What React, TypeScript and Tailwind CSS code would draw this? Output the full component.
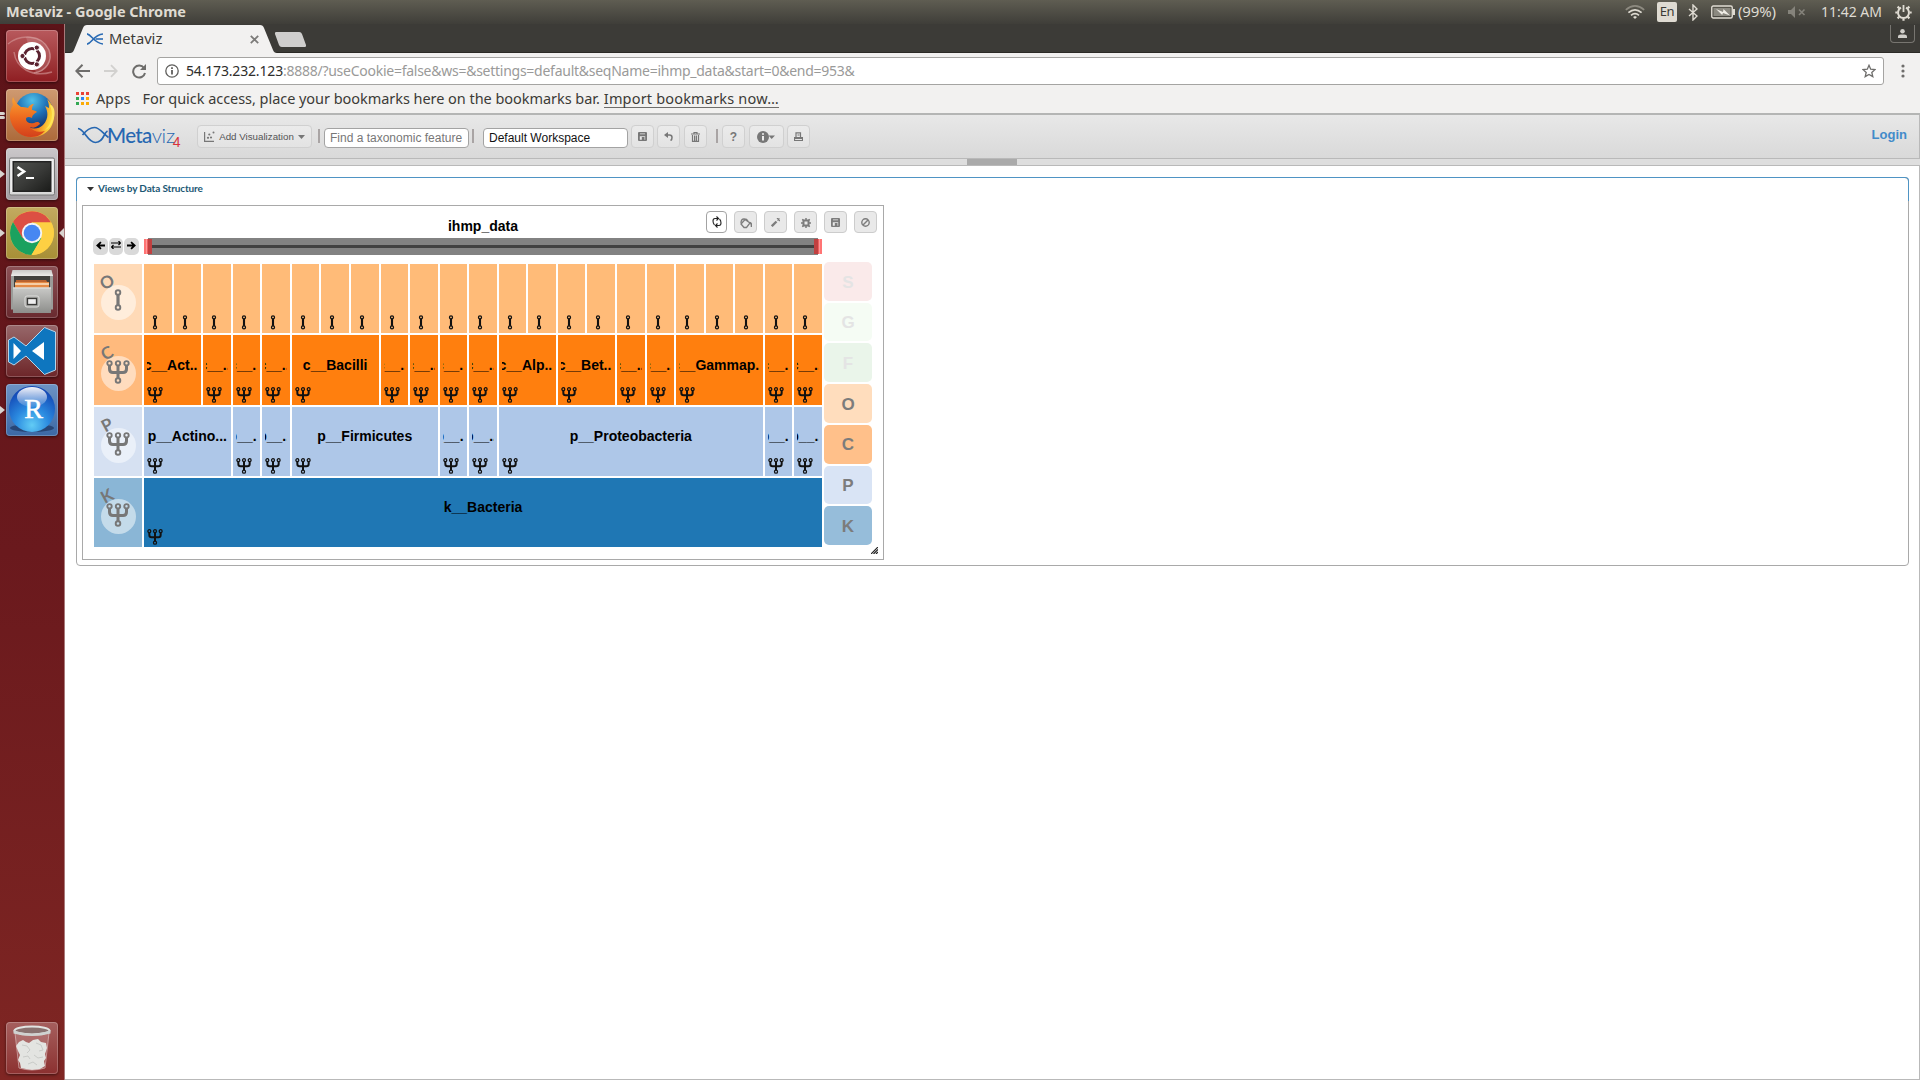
import React from "react";

type P = { children?: React.ReactNode; className?: string };

const NOTO = "font-['Noto_Sans',sans-serif]";
const ARIAL = "font-['Liberation_Sans',sans-serif]";

/* ---------- desktop panel ---------- */

function TopPanel() {
  return (
    <div className={`flex h-6 shrink-0 items-center bg-gradient-to-b from-[#5f5d52] to-[#3f3e39] text-[#dfdbd2] ${NOTO}`}>
      <span className="-mt-[2px] ml-[6px] text-[14.5px] leading-6 font-bold tracking-[-0.03px]">Metaviz - Google Chrome</span>
      <svg className="ml-auto h-[14px] w-5" viewBox="0 0 20 14" fill="none" stroke="#dfdbd2" strokeWidth="1.7">
        <path d="M.8 4.8Q10-3 19.2 4.8" stroke="#8d8a80" />
        <path d="M3.4 7.6Q10 2 16.6 7.6" />
        <path d="M6 10.3Q10 7 14 10.3" />
        <path d="M8 12l2 2 2-2-2-1z" fill="#dfdbd2" stroke="none" />
      </svg>
      <span className="ml-3 flex h-5 w-5 items-center justify-center rounded-[2px] bg-[#dfdbd2] text-[13px] tracking-[-0.5px] text-[#3c3b37]">En</span>
      <svg className="ml-[11px] h-[17px] w-[10px]" viewBox="0 0 10 17" fill="none" stroke="#dfdbd2" strokeWidth="1.4">
        <path d="M1 5l8 7-4 4V1l4 4-8 7" />
      </svg>
      <svg className="ml-[13px] h-[14px] w-6" viewBox="0 0 24 14">
        <rect x=".75" y="1" width="20.5" height="12" rx="1.5" fill="none" stroke="#dfdbd2" strokeWidth="1.4" />
        <rect x="2.5" y="3" width="17" height="8" fill="#8b8980" />
        <path d="M22 4h2v6h-2z" fill="#dfdbd2" />
        <path d="M5 4l7 3 .5-3L19 10.5l-7-2.5-.8 2z" fill="#f0ede6" />
      </svg>
      <span className="-mt-[2px] ml-[3px] text-[15px] leading-6 tracking-[-0.13px]">(99%)</span>
      <svg className="ml-3 h-3 w-[18px]" viewBox="0 0 18 12" fill="#85837b">
        <path d="M0 4h3l4-4v12L3 8H0z" />
        <path d="M11 3.5l5.5 5.5M16.500 3.5L11 9" stroke="#85837b" strokeWidth="1.6" />
      </svg>
      <span className="-mt-px ml-[15px] text-[14px] leading-6">11:42 AM</span>
      <svg className="mr-2 ml-[13px] h-[17px] w-[17px]" viewBox="0 0 17 17" fill="none" stroke="#dfdbd2">
        <path d="M6 3.700A5.500 5.500 0 1 0 11 3.700" strokeWidth="2" />
        <path d="M8.500 1v7" strokeWidth="1.800" />
        <path d="M.3 8.500h2M14.700 8.500h2M2.600 2.600l1.700 1.700M14.400 2.600l-1.700 1.700M2.600 14.400l1.600-1.600M14.400 14.400l-1.600-1.600M8.500 14.700v2" strokeWidth="2.200" />
      </svg>
    </div>
  );
}

/* ---------- launcher ---------- */

function Tile({ children, className = "", left = 0, right = false }: P & { left?: number; right?: boolean }) {
  return (
    <div className="flex h-[52px] items-center">
      <div className="flex w-[6px] flex-col gap-[1px]">
        {left === 1 && <span className="h-0 w-0 border-y-[4px] border-l-[5px] border-y-transparent border-l-[#d9d4d0]" />}
        {left === 2 && (
          <>
            <span className="h-[3px] w-[5px] rounded-r-full bg-[#d9d4d0]" />
            <span className="h-[3px] w-[5px] rounded-r-full bg-[#d9d4d0]" />
          </>
        )}
      </div>
      <div className={`flex h-[52px] w-[52px] items-center justify-center overflow-hidden rounded-[4px] shadow-[inset_0_0_0_1px_rgba(255,255,255,0.22),0_1px_3px_rgba(0,0,0,0.5)] ${className}`}>{children}</div>
      <div className="flex w-[6px] justify-end">
        {right && <span className="h-0 w-0 border-y-[5px] border-r-[5px] border-y-transparent border-r-[#d9d4d0]" />}
      </div>
    </div>
  );
}

function UbuntuIcon() {
  return (
    <svg className="h-[52px] w-[52px]" viewBox="0 0 52 52" fill="none">
      <path d="M2 14C14 4 36 4 43 20c4 11-3 21-15 23" stroke="#d69b9b" strokeOpacity=".6" strokeWidth="1.500" />
      <path d="M8 22c2 16 18 26 38 20" stroke="#d69b9b" strokeOpacity=".6" strokeWidth="1.500" />
      <path d="M20 7c16-2 27 12 24 24-2 7-7 11-14 12z" fill="#fff" fillOpacity=".14" />
      <circle cx="26" cy="26" r="14" fill="#fff" />
      <circle cx="26" cy="26" r="7.500" stroke="#5a2230" strokeWidth="3" />
      <path d="M26 26H15M26 26l5.500-9.500M26 26l5.500 9.500" stroke="#fff" strokeWidth="1.800" />
      <circle cx="26" cy="26" r="5.500" fill="#fff" />
      <g fill="#5a2230" stroke="#fff" strokeWidth="1">
        <circle cx="16.500" cy="26" r="2.600" />
        <circle cx="30.800" cy="17.600" r="2.600" />
        <circle cx="30.800" cy="34.400" r="2.600" />
      </g>
    </svg>
  );
}

function FirefoxIcon() {
  return (
    <svg className="h-[46px] w-[46px]" viewBox="0 0 46 46">
      <defs>
        <radialGradient id="ffg" cx=".45" cy=".2" r=".8">
          <stop offset="0" stopColor="#4fc0e8" />
          <stop offset=".5" stopColor="#1e6fb5" />
          <stop offset="1" stopColor="#12275f" />
        </radialGradient>
        <linearGradient id="fff" x1="0" y1="0" x2="1" y2=".2">
          <stop offset="0" stopColor="#e8641c" />
          <stop offset=".7" stopColor="#ee7a1d" />
          <stop offset="1" stopColor="#fddc3c" />
        </linearGradient>
        <linearGradient id="ffb" x1="0" y1="0" x2="0" y2="1">
          <stop offset="0" stopColor="#f9a535" />
          <stop offset=".5" stopColor="#ee6b1f" />
          <stop offset="1" stopColor="#d3401b" />
        </linearGradient>
      </defs>
      <circle cx="25" cy="20" r="19" fill="url(#ffg)" />
      <path d="M38 7c8 7 9 20 4 28-5 8-14 11-21 10-9-1-16-7-18-14l7-6c4 11 17 15 24 8 6-6 5-14 2-19l4 2c0-4-1-7-2-9z" fill="url(#fff)" />
      <path d="M4 5c-1 3-1 5 0 8-3 4-4 11-2 17 3 9 11 15 20 15 7 0 11-3 14-6-7 2-12 0-15-4 5 2 7-1 10-3-1-3-4-2-6-1-5 1-8-1-8-4 0-2 3-3 6-1 0-3 2-4 5-6-1-1-3-2-5-2 0-2 0-4 2-6-3 0-5 2-6 4-2-1-5-1-7-1-3-2-6-5-8-10z" fill="url(#ffb)" />
      <path d="M41 14c4 8 2 18-5 24 8-3 12-17 8-23-1-2-3-3-3-1z" fill="#ffe45c" />
    </svg>
  );
}

function TerminalIcon() {
  return (
    <svg className="h-[52px] w-[52px]" viewBox="0 0 52 52">
      <defs>
        <linearGradient id="tms" x1="0" y1="0" x2="1" y2="1">
          <stop offset="0" stopColor="#4e504d" />
          <stop offset=".5" stopColor="#3a3b39" />
          <stop offset="1" stopColor="#1c1d1b" />
        </linearGradient>
      </defs>
      <rect x="3.500" y="10" width="45" height="37" rx="1.500" fill="#d9d9d9" stroke="#777" />
      <rect x="4.500" y="11" width="43" height="33" fill="#efefef" />
      <rect x="6.500" y="13" width="39" height="31" fill="#222" />
      <rect x="8" y="14.500" width="36" height="28" fill="url(#tms)" />
      <path d="M11.500 19l6.500 4.500-6.500 4.500" fill="none" stroke="#fff" strokeWidth="2.600" />
      <path d="M20 30h8" stroke="#fff" strokeWidth="2.200" />
    </svg>
  );
}

function ChromeIcon() {
  return (
    <svg className="h-[44px] w-[44px]" viewBox="0 0 44 44">
      <circle cx="22" cy="22" r="22" fill="#fdd043" />
      <path d="M3 11A22 22 0 0 1 41.050 11.500H22L12.500 27.500z" fill="#dc4f43" />
      <path d="M3 11A22 22 0 0 0 21.500 44l10-17-19 0z" fill="#1aa15f" />
      <path d="M41.050 11.500A22 22 0 0 1 21.500 44L31.500 27 22 11.500z" fill="#fdd043" />
      <circle cx="22" cy="22" r="10.200" fill="#f4f4f4" />
      <circle cx="22" cy="22" r="8.300" fill="#4787f2" />
    </svg>
  );
}

function FilesIcon() {
  return (
    <svg className="h-[52px] w-[52px]" viewBox="0 0 52 52">
      <defs>
        <linearGradient id="fls" x1="0" y1="0" x2="0" y2="1">
          <stop offset="0" stopColor="#c9c9c7" />
          <stop offset="1" stopColor="#8d8e8b" />
        </linearGradient>
        <linearGradient id="flt" x1="0" y1="0" x2="0" y2="1">
          <stop offset="0" stopColor="#c8c8c6" />
          <stop offset="1" stopColor="#ececea" />
        </linearGradient>
      </defs>
      <rect x="5" y="8.500" width="42" height="35" fill="#9b9c99" />
      <path d="M6.500 4h39L47 10H5z" fill="url(#flt)" />
      <rect x="8" y="10" width="36" height="12" fill="#40403d" />
      <path d="M10 14h30l2 3H10z" fill="#b9622f" />
      <path d="M9 16h34v6H9z" fill="#e58a45" />
      <path d="M9 18h34" stroke="#fbe3c7" strokeWidth="1.300" />
      <path d="M7 21.500h38V47H7z" fill="url(#fls)" />
      <path d="M7 22h38" stroke="#e4e4e2" strokeWidth="1" />
      <rect x="19" y="30" width="14" height="11" rx="2" fill="#a4a5a2" stroke="#dededc" />
      <rect x="21.500" y="32.500" width="9" height="6" fill="#eee" stroke="#3b3b39" strokeWidth="1.300" />
    </svg>
  );
}

function CodeIcon() {
  return (
    <svg className="h-[52px] w-[52px]" viewBox="0 0 52 52">
      <path d="M38.500 2.500L49.500 7v38l-11 4.500L20 31 8 40l-5.500-3V15L8 12l12 9z" fill="#0e76bf" stroke="#b7d5ea" strokeWidth="1" />
      <path d="M38 17v18L26 26z" fill="#fff" />
      <path d="M7.500 18v16l7.500-8z" fill="#fff" />
    </svg>
  );
}

function RIcon() {
  return (
    <svg className="h-[52px] w-[52px]" viewBox="0 0 52 52">
      <defs>
        <radialGradient id="rst" cx=".5" cy=".85" r=".8">
          <stop offset="0" stopColor="#62ccf5" />
          <stop offset=".45" stopColor="#2b8be0" />
          <stop offset="1" stopColor="#1246b4" />
        </radialGradient>
        <linearGradient id="rsh" x1="0" y1="0" x2="0" y2="1">
          <stop offset="0" stopColor="#fff" stopOpacity=".95" />
          <stop offset="1" stopColor="#fff" stopOpacity=".1" />
        </linearGradient>
      </defs>
      <ellipse cx="26" cy="44" rx="22" ry="4" fill="#1c3560" fillOpacity=".7" />
      <circle cx="26" cy="25" r="23" fill="url(#rst)" />
      <ellipse cx="26" cy="13" rx="15" ry="10" fill="url(#rsh)" />
      <text x="27.500" y="34" textAnchor="middle" className="font-['Liberation_Serif',serif] text-[28px]" fill="#fff" stroke="#fff" strokeWidth=".5">R</text>
    </svg>
  );
}

function TrashTile() {
  return (
    <svg className="h-[52px] w-[52px]" viewBox="0 0 52 52">
      <path d="M9 11h34l-5 35q-12 4-24 0z" fill="#f0dede" fillOpacity=".2" />
      <path d="M13 20l4-2 3 2 3 1 4-3 5-1 3 3 5 1 1 5-2 6 1 4-2 3 1 5-5 3-8 1-6-1-5-1-1-5-2-3 2-5-2-4-2-5z" fill="#e3e4e1" />
      <path d="M16 23l5 1 3 4-3 3M30 21l5 2 2 5-4 1M17 35l5-1 2 3M28 33l4 3 5-1M22 42l5-2 4 3" fill="none" stroke="#c9cbc8" strokeWidth="1" />
      <path d="M9 11l4 35q13 4 26 0l4-35" fill="none" stroke="#e6cfcf" strokeOpacity=".6" />
      <ellipse cx="26" cy="8.500" rx="17.500" ry="4" fill="#8a7270" stroke="#e2e4e2" strokeWidth="2" />
      <path d="M7.500 8v3.500q18.500 5 37 0V8q-18.500 7.500-37 0z" fill="#cfd2d0" />
    </svg>
  );
}

function Launcher() {
  return (
    <div className="flex w-16 shrink-0 flex-col gap-[7px] bg-gradient-to-b from-[#5c1318] via-[#6a191d] to-[#7f2623] pt-[6px] pb-[6px]">
      <Tile className="bg-gradient-to-b from-[#b8595d] to-[#8f1d22]"><UbuntuIcon /></Tile>
      <Tile left={2} className="bg-gradient-to-b from-[#cf9a71] to-[#ac6a3a]"><FirefoxIcon /></Tile>
      <Tile left={1} className="bg-gradient-to-b from-[#cbc8ca] to-[#a39fa3]"><TerminalIcon /></Tile>
      <Tile left={1} right className="bg-gradient-to-b from-[#c3aa60] to-[#a78f36]"><ChromeIcon /></Tile>
      <Tile className="bg-gradient-to-b from-[#8c5257] to-[#692a2f]"><FilesIcon /></Tile>
      <Tile className="bg-gradient-to-b from-[#97686b] to-[#6d2529]"><CodeIcon /></Tile>
      <Tile left={1} className="bg-gradient-to-b from-[#6d93c4] to-[#3c69a6]"><RIcon /></Tile>
      <div className="mt-auto"><Tile className="bg-gradient-to-b from-[#a55f5e] to-[#8c3030]"><TrashTile /></Tile></div>
    </div>
  );
}

/* ---------- browser chrome ---------- */

function TabStrip() {
  return (
    <div className="flex h-[29px] shrink-0 items-start border-b border-[#2b2a26] bg-[#3c3b37]">
      <div className="relative mt-[1px] -mb-[1px] ml-[5px] flex h-[28px] w-[207px] items-center">
        <svg className="absolute inset-0 h-[28px] w-[207px]" viewBox="0 0 207 28">
          <path d="M0 28q3 0 4-3L13 3q1-3 4-3h173q3 0 4 3l9 22q1 3 4 3z" fill="#f2f1f0" />
        </svg>
        <svg className="relative ml-[17px] h-3 w-4" viewBox="0 0 16 12" fill="none" stroke="#2a6bb4" strokeWidth="1.600">
          <path d="M0 .8C5 2 7 10 16 11" />
          <path d="M0 11.200C5 10 7 1.500 16 1" />
          <path d="M8.500 6H16" />
        </svg>
        <span className={`relative -mt-[2px] ml-[6px] text-[14.7px] leading-7 text-[#3c3b37] ${NOTO}`}>Metaviz</span>
        <svg className="relative mr-[18px] ml-auto h-[9px] w-[9px]" viewBox="0 0 9 9" stroke="#7c7b79" strokeWidth="1.800">
          <path d="M.8.8l7.400 7.400M8.200.8L.8 8.200" />
        </svg>
      </div>
      <div className="mt-2 ml-0 h-[15px] w-[27px] skew-x-[20deg] rounded-[2px] bg-[#cfcecd]" />
      <div className="mt-[1px] mr-[5px] ml-auto flex h-[18px] w-[25px] items-center justify-center rounded-b-[4px] border border-t-0 border-[#777570]">
        <svg className="h-[9px] w-[9px]" viewBox="0 0 10 10" fill="#d0cec9">
          <circle cx="5" cy="2.500" r="2.500" />
          <path d="M0 10V8q0-2 3-2h4q3 0 3 2v2z" />
        </svg>
      </div>
    </div>
  );
}

function AddressBar() {
  return (
    <div className="flex h-[36px] shrink-0 items-center bg-[#f2f1f0]">
      <svg className="ml-[10px] h-[14px] w-[15px]" viewBox="0 0 15 14" fill="none" stroke="#6e6d6b" strokeWidth="2"><path d="M15 7H1.500M7.500.8L1.300 7l6.200 6.200" /></svg>
      <svg className="ml-[14px] h-[14px] w-[14px]" viewBox="0 0 15 14" fill="none" stroke="#d2d1cf" strokeWidth="2"><path d="M0 7h13.500M7.500.8L13.700 7l-6.200 6.200" /></svg>
      <svg className="ml-[14px] h-[15px] w-[14px]" viewBox="0 0 14 15" fill="none" stroke="#6e6d6b" strokeWidth="2"><path d="M12 4A6 6 0 1 0 13 9" /><path d="M14 0v6H8z" fill="#6e6d6b" stroke="none" /></svg>
      <div className={`ml-[11px] flex h-7 w-[1727px] items-center rounded-[3px] border border-[#a5a4a2] bg-white text-[14px] ${NOTO}`}>
        <svg className="ml-[7px] h-[14px] w-[14px]" viewBox="0 0 14 14" fill="none" stroke="#5f5e5c"><circle cx="7" cy="7" r="6.200" strokeWidth="1.300" /><path d="M7 6v4.500M7 3.300V5" strokeWidth="1.800" /></svg>
        <span className="-mt-[2px] ml-[7px] tracking-[-0.17px] text-[#2e2e2c]">54.173.232.123</span>
        <span className="-mt-[2px] tracking-[-0.26px] text-[#9a9a99]">:8888/?useCookie=false&amp;ws=&amp;settings=default&amp;seqName=ihmp_data&amp;start=0&amp;end=953&amp;</span>
        <svg className="mr-[7px] ml-auto h-[14px] w-[14px]" viewBox="0 0 14 14" fill="none" stroke="#6e6d6b" strokeWidth="1.300"><path d="M7 1.300l1.700 3.900 4.300.4-3.200 2.800 1 4.200L7 10.400l-3.800 2.200 1-4.200L1 5.600l4.300-.4z" /></svg>
      </div>
      <svg className="ml-[16.500px] h-[14px] w-1" viewBox="0 0 4 14" fill="#6e6d6b"><circle cx="2" cy="2" r="1.600" /><circle cx="2" cy="7" r="1.600" /><circle cx="2" cy="12" r="1.600" /></svg>
    </div>
  );
}

const APP_COLORS = ["bg-[#ea4335]", "bg-[#ea4335]", "bg-[#ea4335]", "bg-[#34a853]", "bg-[#2f84f5]", "bg-[#fbab05]", "bg-[#34a853]", "bg-[#fbab05]", "bg-[#fbab05]"];

function BookmarksBar() {
  return (
    <div className={`flex h-[26px] shrink-0 items-center border-b-2 border-[#b4b5b4] bg-[#f2f1f0] text-[14.5px] text-[#3c3b37] ${NOTO}`}>
      <div className="mt-[-5px] ml-[11px] grid grid-cols-3 gap-[2px]">
        {APP_COLORS.map((c, i) => <i key={i} className={`h-[3px] w-[3px] ${c}`} />)}
      </div>
      <span className="mt-[-5px] ml-[7px] tracking-[0.1px]">Apps</span>
      <span className="mt-[-5px] ml-[12px] tracking-[-0.045px]">For quick access, place your bookmarks here on the bookmarks bar.</span>
      <span className="mt-[-5px] ml-1 border-b border-[#6e6d6b] leading-[18px] tracking-[0.18px]">Import bookmarks now…</span>
    </div>
  );
}

/* ---------- Metaviz page ---------- */

function NavButton({ children, className = "w-[23px]" }: P) {
  return <div className={`flex h-[23px] shrink-0 items-center justify-center rounded-[4px] border border-[#d0d0d0] bg-gradient-to-b from-[#ebebeb] to-[#e3e3e3] text-[#777] ${className}`}>{children}</div>;
}

function SaveIcon() {
  return (
    <svg className="h-[9px] w-[9px]" viewBox="0 0 9 9" fill="currentColor">
      <path fillRule="evenodd" d="M1 0h7q1 0 1 1v7q0 1-1 1H1Q0 9 0 8V1q0-1 1-1zM2 1.500v.7h5v-.7zM1.800 4.300v3.500h5.400V4.300z" />
      <path d="M3.800 5h2.700v3H3.800z" />
    </svg>
  );
}

function Sep({ className = "" }: P) {
  return <span className={`mt-[-1px] h-[14px] w-[2px] bg-[#a9a4a4] ${className}`} />;
}

function PageHeader() {
  return (
    <>
      <div className={`flex h-[44px] shrink-0 items-center border-r border-b border-[#b9b9b9] bg-gradient-to-b from-[#e8e8e8] to-[#d9d9d9] ${ARIAL}`}>
        <div className="mt-[-3px] ml-[12px] flex w-[120px] items-center">
          <svg className="h-[18px] w-[32px] shrink-0" viewBox="0 0 31 18" fill="none" stroke="#2767b1" strokeWidth="1.700">
            <path d="M.5 2.500C7 3 10 16.500 18 16.500S26 7 30 5" />
            <path d="M5 9C9 4 12 1.500 17 1.500S26 8 31 11.500" />
          </svg>
          <span className="-ml-[2px] font-['Lato',sans-serif] text-[20.500px] leading-[20px] font-medium tracking-[-0.65px] text-[#2767b1]">Meta<span className="font-light tracking-[-0.3px]">viz</span></span>
          <span className="mt-[14px] -ml-[2px] text-[14px] leading-3 text-[#d8333b]">4</span>
        </div>
        <NavButton className="w-[115px] text-[9.75px]">
          <svg className="mr-[4px] ml-[2px] h-[11px] w-[11px]" viewBox="0 0 11 11" fill="#777"><path d="M0 1h1.200v8.800H10V11H0z" /><circle cx="4" cy="6.800" r="1.100" /><circle cx="7" cy="6.500" r="1.100" /><circle cx="5.300" cy="3.500" r="1.100" /><circle cx="9.500" cy="1.500" r="1" /></svg>
          <span className="mt-px text-[#555]">Add Visualization</span>
          <svg className="mr-[2px] ml-[4px] h-1 w-[7px]" viewBox="0 0 7 4" fill="#777"><path d="M0 0h7L3.500 4z" /></svg>
        </NavButton>
        <Sep className="ml-[6px]" />
        <div className="mt-[3px] ml-1 flex h-5 w-[145px] items-center rounded-[4px] border border-[#a3a3a3] bg-white pl-[5px] text-[12px] whitespace-nowrap text-[#777]">Find a taxonomic feature</div>
        <Sep className="ml-[3px]" />
        <div className="mt-[3px] ml-[9px] flex h-5 w-[145px] items-center rounded-[4px] border border-[#a3a3a3] bg-white pl-[5px] text-[12px] whitespace-nowrap text-[#111]">Default Workspace</div>
        <div className="ml-[2.500px] flex gap-[3.500px]">
          <NavButton><SaveIcon /></NavButton>
          <NavButton>
            <svg className="h-[9px] w-[9px]" viewBox="0 0 9 9" fill="none" stroke="currentColor" strokeWidth="1.500"><path d="M4 0L0 3l4 3z" fill="currentColor" stroke="none" /><path d="M3 3h2.500Q8 3 8 5.500T6.500 8.500" /></svg>
          </NavButton>
          <NavButton>
            <svg className="h-[10px] w-[9px]" viewBox="0 0 9 10" fill="none" stroke="currentColor"><path d="M0 2h9M3 1.500V.5h3v1M1.500 3v6.300h6V3M3.600 3.500V9M5.400 3.500V9" strokeWidth="1.200" /></svg>
          </NavButton>
        </div>
        <Sep className="ml-[9.500px]" />
        <div className="ml-[4px] flex gap-[3.500px]">
          <NavButton><b className="text-[12px] text-[#777]">?</b></NavButton>
          <NavButton className="w-[35px]">
            <svg className="h-3 w-[18px]" viewBox="0 0 18 12"><circle cx="6" cy="6" r="6" fill="#777" /><path d="M5 5h2v4.500H5zM5 2.300h2v1.500H5z" fill="#eee" /><path d="M11.500 4.500h6.500L14.700 8z" fill="#777" /></svg>
          </NavButton>
          <NavButton>
            <svg className="h-[9px] w-[9px]" viewBox="0 0 9 9" fill="none" stroke="currentColor" strokeWidth="1.200"><path d="M2 5V.8h4.500V5M3.500 3h2" /><path d="M.5 5.500h8v3h-8z" /><path d="M.5 6h8" strokeWidth="2" /></svg>
          </NavButton>
        </div>
        <b className="mt-[-4px] mr-[12px] ml-auto text-[13px] text-[#428bca]">Login</b>
      </div>
      <div className="flex h-[7px] shrink-0 justify-center border-b border-[#b9b9b9] bg-[#dedede] pr-[2px]">
        <div className="h-[6px] w-[50px] bg-[#aaaaaa]" />
      </div>
    </>
  );
}

function TreeIcon({ kind, className }: { kind: "fork" | "single"; className: string }) {
  return (
    <svg className={className} viewBox="0 0 24 24" fill="none" stroke="currentColor">
      {kind === "fork" ? (
        <>
          <path d="M3.500 5v4q0 3.500 3.500 3.500h10q3.500 0 3.500-3.500V5M12 5v14" strokeWidth="3" />
          <g strokeWidth="1.900" className="fill-[var(--node)]">
            <circle cx="3.500" cy="3.300" r="2.200" />
            <circle cx="12" cy="3.300" r="2.200" />
            <circle cx="20.500" cy="3.300" r="2.200" />
            <circle cx="12" cy="20.500" r="2.300" />
          </g>
        </>
      ) : (
        <>
          <path d="M12 4v13" strokeWidth="3.200" />
          <g strokeWidth="1.900" className="fill-[var(--node)]">
            <circle cx="12" cy="3.500" r="2.300" />
            <circle cx="12" cy="18.500" r="2.300" />
          </g>
        </>
      )}
    </svg>
  );
}

type Cell = [label: string, span: number];
type Level = { key: string; kind: "fork" | "single"; head: string; cell: string; cells: Cell[] };

const LEVELS: Level[] = [
  { key: "O", kind: "single", head: "bg-[#ffdab7] [--node:#ffeddb]", cell: "bg-[#ffbb78] [--node:#ffbb78]", cells: Array.from({ length: 23 }, () => ["", 1] as Cell) },
  {
    key: "C", kind: "fork", head: "bg-[#ffba7d] [--node:#ffdcbe]", cell: "bg-[#ff7f0e] [--node:#ff7f0e]",
    cells: [["c__Act...", 2], ["c__...", 1], ["c__...", 1], ["c__...", 1], ["c__Bacilli", 3], ["c__...", 1], ["c__...", 1], ["c__...", 1], ["c__...", 1], ["c__Alp...", 2], ["c__Bet...", 2], ["c__...", 1], ["c__...", 1], ["c__Gammap...", 3], ["c__...", 1], ["c__...", 1]],
  },
  {
    key: "P", kind: "fork", head: "bg-[#d6e1f2] [--node:#eaf0f9]", cell: "bg-[#aec7e8] [--node:#aec7e8]",
    cells: [["p__Actino...", 3], ["p__...", 1], ["p__...", 1], ["p__Firmicutes", 5], ["p__...", 1], ["p__...", 1], ["p__Proteobacteria", 9], ["p__...", 1], ["p__...", 1]],
  },
  { key: "K", kind: "fork", head: "bg-[#8ab6d6] [--node:#c4dbea]", cell: "bg-[#1f77b4] [--node:#1f77b4]", cells: [["k__Bacteria", 23]] },
];

const SPANS: Record<number, string> = { 1: "col-span-1", 2: "col-span-2", 3: "col-span-3", 5: "col-span-5", 9: "col-[span_9]", 23: "col-[span_23]" };

function LevelRow({ level }: { level: Level }) {
  return (
    <div className="flex min-h-0 flex-1 gap-[2px]">
      <div className={`relative flex w-12 shrink-0 items-center justify-center text-[#777] ${level.head}`}>
        <div className="mt-[8px] flex h-[35px] w-[35px] items-center justify-center rounded-full bg-[var(--node)]">
          <TreeIcon kind={level.kind} className="-mt-[3px] h-6 w-6" />
        </div>
        <span className="absolute top-[8px] left-[5px] flex h-5 w-4 -rotate-[28deg] items-center justify-center font-['Lato',sans-serif] text-[17px] font-bold">{level.key}</span>
      </div>
      <div className="grid w-[678px] shrink-0 grid-cols-[repeat(23,minmax(0,1fr))] gap-[2px]">
        {level.cells.map(([label, span], i) => (
          <div key={i} className={`flex min-w-0 flex-col px-[3px] pt-[19.3px] ${SPANS[span]} ${level.cell}`}>
            <div className="flex h-5 justify-center overflow-hidden text-[14px] leading-5 font-bold whitespace-nowrap text-black">
              <span className="shrink-0">{label}</span>
            </div>
            <TreeIcon kind={level.kind} className="mt-[12px] h-4 w-4 shrink-0 text-[#111]" />
          </div>
        ))}
      </div>
    </div>
  );
}

const LEGEND = [
  ["S", "bg-[#faeaea] text-[#e4e4e4]"],
  ["G", "bg-[#f5fcf4] text-[#e4e4e4]"],
  ["F", "bg-[#eaf5ea] text-[#e4e4e4]"],
  ["O", "bg-[#ffddbd] text-[#7c7c7c]"],
  ["C", "bg-[#ffc08a] text-[#7c7c7c]"],
  ["P", "bg-[#d9e4f5] text-[#7c7c7c]"],
  ["K", "bg-[#96bdda] text-[#7c7c7c]"],
];

function ChartButton({ children, active = false }: P & { active?: boolean }) {
  return (
    <div className={`flex h-[22px] items-center justify-center rounded-[4px] border ${active ? "w-[21px] border-[#a3a3a3] bg-white text-[#222]" : "w-[23px] border-[#cccccc] bg-[#e9e9e9] text-[#7c7c7c]"}`}>{children}</div>
  );
}

function ChartToolbar() {
  return (
    <div className="flex gap-[7px]">
      <ChartButton active>
        <svg className="h-[12px] w-[10px]" viewBox="0 0 10 12" fill="none" stroke="currentColor" strokeWidth="1.100"><path d="M6 2.500H3Q1 2.500 1 5t1.500 4M4 9.500h3Q9 9.500 9 7T7.500 3" /><path d="M4.500.5l2 2-2 2M5.500 7.500l-2 2 2 2" /></svg>
      </ChartButton>
      <ChartButton>
        <svg className="mt-[2px] h-[11px] w-3" viewBox="0 0 12 11" fill="none" stroke="currentColor" strokeWidth="1.300"><path d="M1 6l4-4.500L10 5 6.500 9.500H4z" /><path d="M1 5Q1 1 4 1t4 2" /><path d="M9.500 4.500Q12 5 11.500 9" strokeWidth="1.700" /></svg>
      </ChartButton>
      <ChartButton>
        <svg className="h-[9px] w-[9px]" viewBox="0 0 9 9" fill="none" stroke="currentColor"><path d="M.8 8.200L5.500 3.500" strokeWidth="2.300" /><path d="M6.500 2.500L8.500.5M6 0l3 3" strokeWidth="1.200" /></svg>
      </ChartButton>
      <ChartButton>
        <svg className="mt-[2px] ml-px h-[10px] w-[10px]" viewBox="0 0 10 10" fill="none" stroke="currentColor"><rect x="2.500" y="2.500" width="5" height="5" strokeWidth="2" /><path d="M5 0v2M5 8v2M0 5h2M8 5h2M1.300 1.300l1.500 1.500M8.700 1.300L7.200 2.800M1.300 8.700l1.500-1.500M8.700 8.700L7.200 7.200" strokeWidth="1.500" /></svg>
      </ChartButton>
      <ChartButton><SaveIcon /></ChartButton>
      <ChartButton>
        <svg className="h-[9px] w-[9px]" viewBox="0 0 9 9" fill="none" stroke="currentColor" strokeWidth="1.400"><circle cx="4.500" cy="4.500" r="3.700" /><path d="M2 7l5-5" /></svg>
      </ChartButton>
    </div>
  );
}

function Handle({ side }: { side: "left" | "right" }) {
  return (
    <div className={`z-10 flex h-[15px] w-2 ${side === "left" ? "-mr-1 flex-row" : "-ml-1 flex-row-reverse"}`}>
      <i className="w-[2px] bg-[#ff7474]" />
      <i className="w-[1px] bg-[#ff9a9a]" />
      <i className="w-[1px] bg-[#ee6060]" />
      <i className="w-[4px] bg-[#c14040]" />
    </div>
  );
}

function RangeSlider() {
  return (
    <div className="flex items-center">
      <Handle side="left" />
      <div className="flex h-[17px] w-[670px] items-center bg-[#828282]"><div className="h-[3px] w-full bg-[#414141]" /></div>
      <Handle side="right" />
    </div>
  );
}

function SmallButton({ children }: P) {
  return <div className="flex h-[17px] w-[14.500px] items-center justify-center rounded-[5px] bg-[#d9d9d9]">{children}</div>;
}

function Icicle() {
  return (
    <div className={`relative ml-[5px] flex h-[355px] w-[802px] flex-col border border-[#a9a9a9] bg-white pl-[11px] ${ARIAL}`}>
      <div className="flex pt-[5px]">
        <div className="w-[612px]">
          <div className="flex h-[22px] w-[778px] items-center justify-center pt-[8px] text-[14px] font-bold text-black"><span>ihmp_data</span></div>
        </div>
        <ChartToolbar />
      </div>
      <div className="mt-[5px] flex h-[17px]">
        <div className="-ml-px flex w-[51px] gap-[1px]">
          <SmallButton>
            <svg className="-mt-[3px] h-[9px] w-[9px]" viewBox="0 0 10 9" fill="none" stroke="#000" strokeWidth="2"><path d="M10 4.500H2M5.500.8L1.500 4.500l4 3.700" /></svg>
          </SmallButton>
          <SmallButton>
            <svg className="-mt-[3px] h-[8px] w-[10px]" viewBox="0 0 10 8" fill="none" stroke="#000" strokeWidth="1.200"><path d="M0 2h9M7.500 0l2 2-2 2M10 6H1M2.500 4l-2 2 2 2" /></svg>
          </SmallButton>
          <SmallButton>
            <svg className="-mt-[3px] h-[9px] w-[9px]" viewBox="0 0 10 9" fill="none" stroke="#000" strokeWidth="2"><path d="M0 4.500h8M4.500.8l4 3.700-4 3.700" /></svg>
          </SmallButton>
        </div>
        <RangeSlider />
      </div>
      <div className="mt-[7px] flex gap-[2px]">
        <div className="mt-[2px] flex h-[283px] flex-col gap-[2px]">
          {LEVELS.map((l) => <LevelRow key={l.key} level={l} />)}
        </div>
        <div className="flex h-[283px] w-12 flex-col gap-[2px]">
          {LEGEND.map(([k, c]) => (
            <div key={k} className={`flex flex-1 items-center justify-center rounded-[5px] pt-[2px] text-[17px] font-bold ${c}`}>{k}</div>
          ))}
        </div>
      </div>
      <svg className="absolute right-[5px] bottom-[5px] h-[7px] w-[7px]" viewBox="0 0 7 7" stroke="#222" strokeWidth="1.200"><path d="M0 7L7 0M2.500 7L7 2.500M5 7l2-2" /></svg>
    </div>
  );
}

function ViewsPanel() {
  return (
    <div className="mt-[11px] mr-[10px] ml-[11px] flex h-[389px] flex-col rounded-[4px] border border-[#a9a9a9]">
      <div className="-mx-px -mt-px flex h-[24px] items-center rounded-t-[4px] border border-b-0 border-[#4f94c4] pl-[10px]">
        <svg className="mt-[-1px] h-1 w-[7px]" viewBox="0 0 7 4" fill="#333"><path d="M0 0h7L3.500 4z" /></svg>
        <span className="-mt-[2px] ml-[4px] font-['Lato',sans-serif] text-[10px] font-bold tracking-[-0.13px] text-[#1b5874]">Views by Data Structure</span>
      </div>
      <div className="mt-[4px]"><Icicle /></div>
    </div>
  );
}

export default function App() {
  return (
    <div className="flex h-[1080px] w-[1920px] flex-col overflow-hidden bg-white">
      <TopPanel />
      <div className="flex min-h-0 flex-1">
        <Launcher />
        <div className="flex min-w-0 flex-1 flex-col border-l border-[#a9797a]">
          <TabStrip />
          <AddressBar />
          <BookmarksBar />
          <PageHeader />
          <div className="flex-1 border-r border-b border-[#b9b9b9] bg-white">
            <ViewsPanel />
          </div>
        </div>
      </div>
    </div>
  );
}
